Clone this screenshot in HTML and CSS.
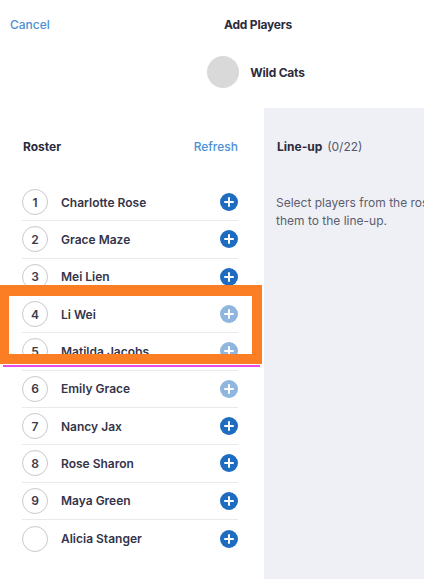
FILE: index.html
```html
<!DOCTYPE html>
<html lang="en">
<head>
    <meta charset="UTF-8">
    <meta name="viewport" content="width=device-width, initial-scale=1.0">
    <title>Add Players</title>
    <link rel="stylesheet" href="styles.css">
</head>
<body>
    <div class="app">
        <div class="topbar">
            <a class="link cancel">Cancel</a>
            <h1 class="title">Add Players</h1>
        </div>

        <div class="team">
            <div class="team-logo"></div>
            <span class="team-name">Wild Cats</span>
        </div>

        <div class="main">
            <div class="roster">
                <div class="section-head">
                    <span class="section-title">Roster</span>
                    <a class="link">Refresh</a>
                </div>

                <ul class="players">
                    <li class="player"><span class="num">1</span><span class="name">Charlotte Rose</span><span class="add"></span></li>
                    <li class="player"><span class="num">2</span><span class="name">Grace Maze</span><span class="add"></span></li>
                    <li class="player"><span class="num">3</span><span class="name">Mei Lien</span><span class="add"></span></li>
                    <li class="player"><span class="num">4</span><span class="name">Li Wei</span><span class="add off"></span></li>
                    <li class="player"><span class="num">5</span><span class="name">Matilda Jacobs</span><span class="add off"></span></li>
                    <li class="player"><span class="num">6</span><span class="name">Emily Grace</span><span class="add off"></span></li>
                    <li class="player"><span class="num">7</span><span class="name">Nancy Jax</span><span class="add"></span></li>
                    <li class="player"><span class="num">8</span><span class="name">Rose Sharon</span><span class="add"></span></li>
                    <li class="player"><span class="num">9</span><span class="name">Maya Green</span><span class="add"></span></li>
                    <li class="player"><span class="num"></span><span class="name">Alicia Stanger</span><span class="add"></span></li>
                </ul>
            </div>

            <div class="lineup">
                <div class="section-head">
                    <span class="section-title">Line-up <span class="count">(0/22)</span></span>
                </div>
                <p class="hint">Select players from the roster to add them to the line-up.</p>
            </div>
        </div>

        <!-- highlight -->
        <div class="highlight"></div>
        <div class="marker"></div>
    </div>
</body>
</html>
```

FILE: styles.css
```css
* {
    margin: 0;
    padding: 0;
    box-sizing: border-box;
}

html, body {
    overflow: hidden;
}

body {
    font-family: Inter, "Noto Sans", sans-serif;
    background-color: #fff;
    color: #2b2b3c;
    font-size: 12px;
}

.app {
    position: relative;
    width: 512px;
    height: 579px;
    display: flex;
    flex-direction: column;
}

.link {
    color: #4b8fd6;
    font-weight: 500;
    font-size: 12px;
}

.topbar {
    position: relative;
    height: 48px;
    display: flex;
    align-items: center;
    justify-content: center;
}

.cancel {
    position: absolute;
    left: 10px;
}

.title {
    font-size: 12px;
    font-weight: 700;
    color: #2b2b3c;
    letter-spacing: -0.2px;
    margin-left: 4px;
}

.team {
    height: 60px;
    display: flex;
    align-items: center;
    justify-content: center;
    gap: 11px;
    padding-bottom: 12px;
}

.team-logo {
    width: 32px;
    height: 32px;
    border-radius: 50%;
    background-color: #d9d9d9;
}

.team-name {
    font-weight: 700;
    font-size: 12px;
    letter-spacing: -0.2px;
}

.main {
    flex: 1;
    display: flex;
}

.roster {
    width: 264px;
    padding: 30px 26px 0 22px;
}

.section-head {
    display: flex;
    justify-content: space-between;
    align-items: center;
    height: 16px;
    padding-left: 1px;
}

.section-title {
    font-weight: 700;
}

.count {
    font-weight: 400;
    color: #55566a;
    margin-left: 2px;
}

.players {
    list-style: none;
    margin-top: 30px;
}

.player {
    height: 37.33px;
    display: flex;
    align-items: center;
    border-bottom: 1px solid #e9e9ee;
}

.player:last-child {
    border-bottom: none;
}

.num {
    width: 26px;
    height: 26px;
    border-radius: 50%;
    border: 1.5px solid #c9c9cf;
    display: flex;
    align-items: center;
    justify-content: center;
    font-weight: 600;
    font-size: 12px;
    color: #3a3a48;
}

.name {
    flex: 1;
    margin-left: 13px;
    font-weight: 600;
    color: #34344a;
}

.add {
    position: relative;
    width: 18px;
    height: 18px;
    border-radius: 50%;
    background-color: #1e6cc0;
}

.add::before,
.add::after {
    content: "";
    position: absolute;
    background-color: #fff;
    border-radius: 1px;
}

.add::before {
    left: 4px;
    right: 4px;
    top: 8px;
    height: 2px;
}

.add::after {
    top: 4px;
    bottom: 4px;
    left: 8px;
    width: 2px;
}

.add.off {
    background-color: #8fb6df;
}

.lineup {
    flex: 1;
    background-color: #eff0f5;
    padding: 30px 12px 0 12px;
}

.hint {
    margin-top: 40px;
    line-height: 18px;
    color: #5c5d6e;
    width: 224px;
}

/* overlay */
.highlight {
    position: absolute;
    left: 0;
    top: 285px;
    width: 262px;
    height: 79px;
    border: solid #fb7d24;
    border-width: 11px 10px 10px 9px;
}

.marker {
    position: absolute;
    left: 3px;
    top: 365px;
    width: 257px;
    height: 2px;
    background-color: #e64de6;
}
```
